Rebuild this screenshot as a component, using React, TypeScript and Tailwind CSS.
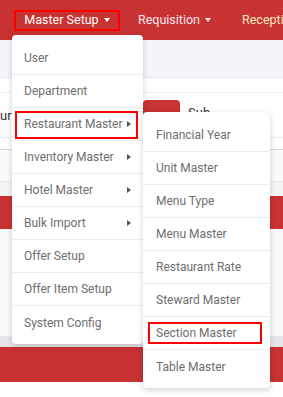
const mainItems = [
  { label: "User" },
  { label: "Department" },
  { label: "Restaurant Master", sub: true, active: true },
  { label: "Inventory Master", sub: true },
  { label: "Hotel Master", sub: true },
  { label: "Bulk Import", sub: true },
  { label: "Offer Setup" },
  { label: "Offer Item Setup" },
  { label: "System Config" },
];

const subItems = [
  "Financial Year",
  "Unit Master",
  "Menu Type",
  "Menu Master",
  "Restaurant Rate",
  "Steward Master",
  "Section Master",
  "Table Master",
];

const Caret = () => (
  <span className="ml-[5px] inline-block h-0 w-0 border-x-[3.5px] border-t-[4px] border-x-transparent border-t-current align-middle" />
);

const RightCaret = () => (
  <span className="inline-block h-0 w-0 border-y-[3.5px] border-l-[4px] border-y-transparent border-l-[#555]" />
);

export default function App() {
  return (
    <div
      className="relative h-[397px] w-[283px] overflow-hidden bg-white"
      style={{ fontFamily: "Roboto, 'Open Sans', sans-serif" }}
    >
      {/* navbar */}
      <nav className="flex h-10 items-center whitespace-nowrap bg-[#c83232] text-[12.5px] text-white">
        <div className="ml-[14px] flex h-[21px] w-[106px] shrink-0 items-center justify-center border-2 border-[#ff0000]">
          Master Setup
          <Caret />
        </div>
        <div className="ml-[18px] flex shrink-0 items-center text-[#fbe8f0]">
          Requisition
          <Caret />
        </div>
        <div className="ml-[31px] shrink-0 text-[#fde7c4]">Reception</div>
      </nav>

      {/* page behind the menus */}
      <div className="h-[38px] border-b border-[#e6e8ee] bg-[#f4f5f9]" />
      <div className="h-[15px] border-b border-[#eef0f3]" />
      <div className="flex h-[45px] items-start border-b border-[#e9ecef] pt-[7px] text-[13px] text-[#333]">
        <span className="ml-0 mt-[6px] w-[12px]">ur</span>
        <div className="ml-[131px] h-[25px] w-[37px] rounded-sm bg-[#c83232]" />
        <span className="ml-2 mt-[3px]">Sub</span>
      </div>
      <div className="h-[12px] border-b border-[#d5d8dc]" />
      <div className="h-[32px] border-b border-[#e9ecef] bg-[#fafafa]" />
      <div className="h-[14px] bg-[#f4f5f7]" />
      <div className="h-[33px] bg-[#c83232]" />
      <div className="h-[107px] bg-[#f8f9fa]" />
      <div className="h-[11px] bg-[#e4e6ea]" />
      <div className="h-[35px] bg-[#c83232]" />

      {/* main dropdown */}
      <div className="absolute left-[12px] top-[35px] w-[131px] rounded bg-white pb-[5px] pt-[7px] shadow-[0_2px_6px_rgba(0,0,0,0.18)]">
        {mainItems.map((it, i) => (
          <div
            key={it.label}
            className={`relative flex h-[33px] items-center justify-between pl-3 pr-[12px] text-[12px] text-[#6e6e6e] ${
              i < mainItems.length - 1 ? "border-b border-[#e9ecef]" : "h-[32px]"
            }`}
          >
            <span>{it.label}</span>
            {it.sub && <RightCaret />}
            {it.active && (
              <div className="absolute left-[3px] top-[3px] h-[28px] w-[123px] border-2 border-[#ff0000]" />
            )}
          </div>
        ))}
      </div>

      {/* sub dropdown */}
      <div className="absolute left-[143px] top-[112px] w-[127px] rounded bg-white pb-[5px] pt-[7px] shadow-[0_2px_6px_rgba(0,0,0,0.18)]">
        {subItems.map((label, i) => (
          <div
            key={label}
            className={`relative flex h-[33px] items-center px-[13px] text-[12px] text-[#6e6e6e] ${
              i < subItems.length - 1 ? "border-b border-[#e9ecef]" : "h-[32px]"
            }`}
          >
            <span>{label}</span>
            {label === "Section Master" && (
              <div className="absolute left-[5px] top-[5px] h-[22px] w-[114px] border-2 border-[#ff0000]" />
            )}
          </div>
        ))}
      </div>
    </div>
  );
}
